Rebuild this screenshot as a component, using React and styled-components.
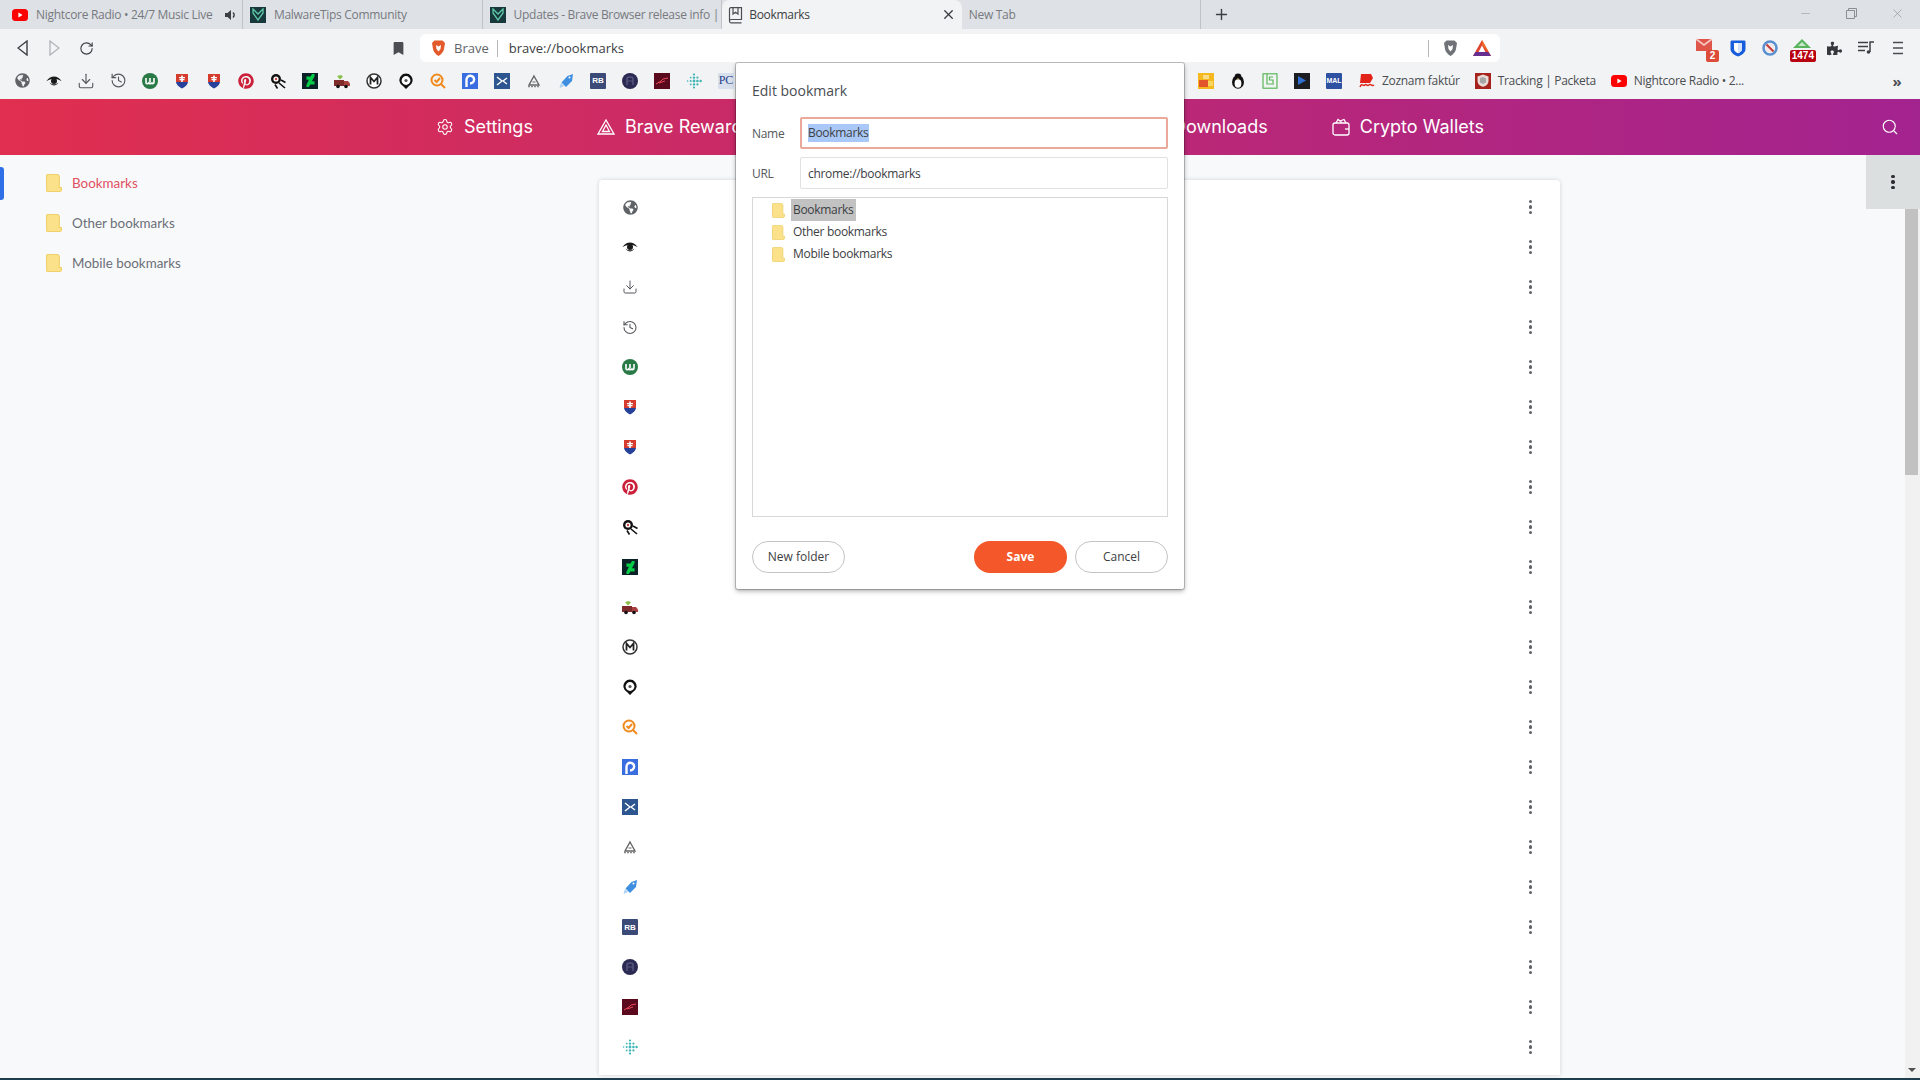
import React from 'react'
import styled, { createGlobalStyle } from 'styled-components'
import { Settings, Search, Plus, X, Minus, RotateCw, Download, History } from 'lucide-react'
import { FaGlobeAmericas, FaPinterest, FaDeviantart, FaPuzzlePiece, FaBookmark } from 'react-icons/fa'

const UI_FONT = '"Open Sans", "Noto Sans", "Liberation Sans", sans-serif'

const GlobalStyle = createGlobalStyle`
  html, body {
    margin: 0;
    height: 100%;
    overflow: hidden;
    background: #f8f9fa;
  }
  * { box-sizing: border-box; }
`

const DarkTile = styled.div`
  width: 16px;
  height: 16px;
  display: flex;
  align-items: center;
  justify-content: center;
  flex: none;
  background: ${(p) => p.$bg};
`

const TextTile = styled.div`
  width: 16px;
  height: 16px;
  display: flex;
  align-items: center;
  justify-content: center;
  flex: none;
  overflow: hidden;
  border-radius: 1px;
  letter-spacing: 0;
  background: ${(p) => p.$bg};
  color: ${(p) => p.$color};
  font-size: ${(p) => p.$size}px;
  font-weight: ${(p) => (p.$bold ? 700 : 400)};
  font-family: ${(p) => (p.$serif ? '"Liberation Serif", serif' : '"Liberation Sans", sans-serif')};
`

const folderPath = 'M1.5 0.5H10.5C12 0.5 12.5 1.5 12.5 3V13.5H14.5V15.5C14.5 16.8 13.8 17.5 12.5 17.5H1.5C0.9 17.5 0.5 17.1 0.5 16.5V1.5C0.5 0.9 0.9 0.5 1.5 0.5Z'

const FolderIcon = ({ w = 16, h = 18 }) => (
  <svg width={w} height={h} viewBox='0 0 15 18' preserveAspectRatio='none'>
    <path d={folderPath} fill='#fbe28a' stroke='#efd06a' />
  </svg>
)

const Shield = () => (
  <svg width='16' height='16' viewBox='0 0 16 16'>
    <path d='M2 1H14V9H2Z' fill='#d63c2e' />
    <path d='M2 9H14C13.6 12 11 14 8 15.5C5 14 2.4 12 2 9Z' fill='#27409a' />
    <path d='M7.2 2.5H8.8V4H11V5.3H8.8V6H10.5V7.2H8.8V9H7.2V7.2H5.5V6H7.2V5.3H5V4H7.2Z' fill='#fff' />
  </svg>
)

const favicons = {
  globe: <FaGlobeAmericas size={15} color='#5f6368' />,
  eye: (
    <svg width='16' height='16' viewBox='0 0 16 16' fill='#1a1a1a'>
      <path d='M0.3 8.2C2.8 4.6 5.4 3.4 8 3.4S13.2 4.6 15.7 8.2C13.2 6.6 11 6 8 6S2.8 6.6 0.3 8.2Z' />
      <circle cx='8' cy='8' r='3' />
      <path d='M3.5 9.5C5 11.8 6.5 12.4 8 12.4S11 11.8 12.5 9.5C11 10.8 9.5 11.3 8 11.3S5 10.8 3.5 9.5Z' />
    </svg>
  ),
  download: <Download size={18} color='#55575c' strokeWidth={1.5} />,
  history: <History size={17} color='#55575c' strokeWidth={1.6} />,
  utorrent: (
    <svg width='16' height='16' viewBox='0 0 16 16'>
      <circle cx='8' cy='8' r='8' fill='#2a7a48' />
      <path d='M4 5V9.5C4 11 6 11 6.7 10C7.4 11 9.3 11 10 10C10.6 11 12 10.7 12 9.3V5M8 5V9.5' fill='none' stroke='#fff' strokeWidth='1.6' />
    </svg>
  ),
  shield: <Shield />,
  pinterest: <FaPinterest size={16} color='#cb1f3a' />,
  comet: (
    <svg width='16' height='16' viewBox='0 0 16 16'>
      <circle cx='6' cy='6' r='5' fill='#111' />
      <circle cx='6' cy='6' r='2.6' fill='#fff' />
      <circle cx='6' cy='6' r='1.2' fill='#c44' />
      <path d='M9 10L15 15M5 11.5L7.5 15.5M11 7L15.5 9.5' stroke='#111' strokeWidth='1.6' />
    </svg>
  ),
  deviant: (
    <DarkTile $bg='#0b2027'>
      <FaDeviantart size={13} color='#05cc47' />
    </DarkTile>
  ),
  truck: (
    <svg width='16' height='16' viewBox='0 0 16 16'>
      <path d='M0 7H10V13H0Z' fill='#7d2b2b' />
      <path d='M10 8H14L16 10.5V13H10Z' fill='#a94040' />
      <circle cx='4' cy='13.5' r='1.8' fill='#111' />
      <circle cx='12' cy='13.5' r='1.8' fill='#111' />
      <path d='M3 3L6 6.5L9 3.5L7 2Z' fill='#8ac04a' />
    </svg>
  ),
  metro: (
    <svg width='16' height='16' viewBox='0 0 16 16'>
      <circle cx='8' cy='8' r='7' fill='#fff' stroke='#333' strokeWidth='1.5' />
      <path d='M4.5 11.5V4.5L8 8.5L11.5 4.5V11.5' fill='none' stroke='#222' strokeWidth='1.8' />
    </svg>
  ),
  target: (
    <svg width='16' height='16' viewBox='0 0 16 16'>
      <path d='M8 16L5 13A6.6 6.6 0 1 1 11 13Z' fill='#111' />
      <circle cx='8' cy='7.5' r='4.4' fill='#fff' />
      <circle cx='8' cy='7.5' r='1.6' fill='#555' />
    </svg>
  ),
  magnifier: (
    <svg width='16' height='16' viewBox='0 0 16 16'>
      <circle cx='7' cy='7' r='5.5' fill='none' stroke='#f08a1d' strokeWidth='2' />
      <path d='M4.5 7L6.6 9L10 5M11 11L15 15' fill='none' stroke='#f08a1d' strokeWidth='2' />
    </svg>
  ),
  pcloud: (
    <DarkTile $bg='#3a6ee0'>
      <svg width='12' height='13' viewBox='0 0 12 13'>
        <path d='M2.5 13V5.5A3.8 3.8 0 1 1 6 9.3' fill='none' stroke='#fff' strokeWidth='2.4' />
      </svg>
    </DarkTile>
  ),
  xtile: (
    <DarkTile $bg='#2d5590'>
      <svg width='12' height='10' viewBox='0 0 12 10'>
        <path d='M1 1L6 5L1 9M11 2L7 5L11 8' fill='none' stroke='#fff' strokeWidth='1.4' />
      </svg>
    </DarkTile>
  ),
  pyramid: (
    <svg width='16' height='16' viewBox='0 0 16 16'>
      <path d='M8 3L13 12H3Z' fill='none' stroke='#666' strokeWidth='1.4' />
      <path d='M6.5 9H9.5' stroke='#666' />
      <path d='M2 13.5H14' stroke='#888' strokeWidth='1.5' strokeDasharray='2 1' />
    </svg>
  ),
  tag: (
    <svg width='16' height='16' viewBox='0 0 16 16'>
      <path d='M15 1L14 8L8 14L3.5 9.5L9.5 3Z' fill='#3f8fe0' />
      <path d='M3 10L6 13L1.5 15Z' fill='#a8d0f4' />
      <circle cx='11.5' cy='4.5' r='1' fill='#fff' />
    </svg>
  ),
  rb: <TextTile $bg='#3c4a78' $color='#fff' $size={8} $bold>RB</TextTile>,
  dark: (
    <svg width='16' height='16' viewBox='0 0 16 16'>
      <circle cx='8' cy='8' r='8' fill='#2a2a52' />
      <path d='M5 12V5.5C5 4.5 6 4 8 4S11 4.5 11 5.5V12' fill='none' stroke='#55557f' strokeWidth='1.5' />
      <path d='M5 8H11' stroke='#55557f' />
    </svg>
  ),
  red: (
    <DarkTile $bg='#5a0a1c'>
      <svg width='14' height='10' viewBox='0 0 14 10'>
        <path d='M1 8L6 5L8 3L13 2M4 7L10 5' fill='none' stroke='#e8485a' strokeWidth='1' />
      </svg>
    </DarkTile>
  ),
  fitbit: (
    <svg width='16' height='16' viewBox='0 0 16 16' fill='#3cb4b4'>
      <circle cx='8' cy='1.5' r='1.1' />
      <circle cx='8' cy='4.6' r='1.2' />
      <circle cx='8' cy='8' r='1.4' />
      <circle cx='8' cy='11.4' r='1.2' />
      <circle cx='8' cy='14.5' r='1.1' />
      <circle cx='11.4' cy='4.6' r='1.1' />
      <circle cx='11.4' cy='8' r='1.3' />
      <circle cx='11.4' cy='11.4' r='1.1' />
      <circle cx='14.6' cy='8' r='1.2' />
      <circle cx='4.7' cy='4.6' r='0.9' />
      <circle cx='4.7' cy='8' r='1' />
      <circle cx='4.7' cy='11.4' r='0.9' />
      <circle cx='1.6' cy='8' r='0.8' />
    </svg>
  ),
  pcforum: <TextTile $bg='#d8e0ee' $color='#24408a' $size={12} $serif>PC</TextTile>,
  video: (
    <svg width='16' height='16' viewBox='0 0 16 16'>
      <rect width='16' height='16' fill='#f5b81f' />
      <rect x='1' y='7' width='9' height='7' fill='#e2552a' />
      <rect x='10' y='8' width='5' height='5' fill='#f6d560' />
      <rect x='5' y='2' width='6' height='4' fill='#f9dc85' />
    </svg>
  ),
  penguin: (
    <svg width='16' height='16' viewBox='0 0 16 16'>
      <ellipse cx='8' cy='9' rx='6' ry='6.8' fill='#111' />
      <circle cx='8' cy='4' r='3.4' fill='#111' />
      <ellipse cx='8' cy='10.5' rx='3.4' ry='4.2' fill='#fff' />
      <path d='M7 5H9L8 6.2Z' fill='#e8a020' />
    </svg>
  ),
  maze: (
    <svg width='16' height='16' viewBox='0 0 16 16' fill='none' stroke='#58b858' strokeWidth='1.2'>
      <rect x='1' y='0.8' width='14' height='14.4' />
      <path d='M5 1V11H10M11 4H7.5V7H11V12' />
    </svg>
  ),
  play: (
    <DarkTile $bg='#1c1d20'>
      <svg width='8' height='9' viewBox='0 0 8 9'>
        <path d='M0 0L8 4.5L0 9Z' fill='#2f6fd0' />
      </svg>
    </DarkTile>
  ),
  mal: <TextTile $bg='#2e51a2' $color='#fff' $size={7} $bold>MAL</TextTile>,
  zoznam: (
    <svg width='16' height='16' viewBox='0 0 16 16'>
      <path d='M2 1H12L14 5L11 10H1Z' fill='#e2231a' />
      <path d='M1 14C3 9 4 14 6 12C7 10 8 14 10 12C11 10 13 14 15 12' fill='none' stroke='#e2231a' strokeWidth='1.4' />
    </svg>
  ),
  packeta: (
    <DarkTile $bg='#a5231c'>
      <svg width='12' height='13' viewBox='0 0 12 13'>
        <path d='M6 0.5L11.5 2.5V7C11.5 10 9 12 6 12.8C3 12 0.5 10 0.5 7V2.5Z' fill='#e9d9d4' />
        <path d='M3 4L6 3L9 4.5V8.5L6 10L3 8.5Z' fill='#a5a5a5' />
      </svg>
    </DarkTile>
  ),
  youtube: (
    <svg width='16' height='16' viewBox='0 0 16 16'>
      <rect x='0' y='2' width='16' height='12' rx='3.5' fill='#f00' />
      <path d='M6.4 5.5L10.6 8L6.4 10.5Z' fill='#fff' />
    </svg>
  ),
  malware: (
    <DarkTile $bg='#17393b'>
      <svg width='12' height='13' viewBox='0 0 12 13'>
        <path d='M1 1L6 6L11 1V5L6 12L1 5Z' fill='none' stroke='#5ec8a8' strokeWidth='1.3' />
      </svg>
    </DarkTile>
  ),
}

const tabs = [
  { icon: 'youtube', title: 'Nightcore Radio • 24/7 Music Live', audio: true },
  { icon: 'malware', title: 'MalwareTips Community' },
  { icon: 'malware', title: 'Updates - Brave Browser release info |' },
  { title: 'Bookmarks', active: true },
  { title: 'New Tab' },
]

const barIcons = ['globe', 'eye', 'download', 'history', 'utorrent', 'shield', 'shield', 'pinterest', 'comet', 'deviant', 'truck', 'metro', 'target', 'magnifier', 'pcloud', 'xtile', 'pyramid', 'tag', 'rb', 'dark', 'red', 'fitbit', 'pcforum']
const barIconsRight = ['video', 'penguin', 'maze', 'play', 'mal']
const barLinks = [
  { icon: 'zoznam', title: 'Zoznam faktúr' },
  { icon: 'packeta', title: 'Tracking | Packeta' },
  { icon: 'youtube', title: 'Nightcore Radio • 2...' },
]
const listIcons = barIcons.slice(0, 22)
const folders = ['Bookmarks', 'Other bookmarks', 'Mobile bookmarks']

const Kebab = () => (
  <KebabDots>
    <i />
    <i />
    <i />
  </KebabDots>
)

const BookIcon = () => (
  <svg width='15' height='17' viewBox='0 0 15 17' fill='none' stroke='#4a4d52' strokeWidth='1.2'>
    <path d='M1.5 14V2C1.5 1.2 2 0.7 2.8 0.7H13.5V12.5H3C2 12.5 1.5 13 1.5 14S2 15.8 3 15.8H13.5' />
    <path d='M5 1V7L7.5 5.2L10 7V1' />
  </svg>
)

const BraveShield = ({ color }) => (
  <svg width='15' height='17' viewBox='0 0 15 17'>
    <path d='M3.5 0.5H11.5L14 3L13 9C12.5 12 10 14.5 7.5 16C5 14.5 2.5 12 2 9L1 3Z' fill={color} />
    <path d='M5 5L7.5 6.5L10 5L9.5 9L7.5 11.5L5.5 9Z' fill='#fff' />
  </svg>
)

const BatLogo = () => (
  <svg width='18' height='16' viewBox='0 0 18 16'>
    <path d='M9 0L18 16H0Z' fill='#e0442e' />
    <path d='M0 16H18L15.5 12H2.5Z' fill='#662d91' />
    <path d='M9 0L18 16L15.5 12L9 5Z' fill='#f26b21' />
    <path d='M9 5.5L12.4 12H5.6Z' fill='#fff' />
  </svg>
)

const App = () => (
  <Page>
    <GlobalStyle />
    <TabStrip>
      {tabs.map((tab) => (
        <Tab key={tab.title} $active={tab.active} $audio={tab.audio}>
          {tab.active ? <BookIcon /> : tab.icon && favicons[tab.icon]}
          <TabTitle $active={tab.active}>{tab.title}</TabTitle>
          {tab.audio && (
            <svg width='12' height='12' viewBox='0 0 12 12' fill='#3c4043'>
              <path d='M0 4H2.5L6 1V11L2.5 8H0Z' />
              <path d='M8 3.5C9.4 5 9.4 7 8 8.5' fill='none' stroke='#3c4043' strokeWidth='1.4' />
            </svg>
          )}
          {tab.active && <X size={15} color='#3c4043' strokeWidth={2.2} />}
        </Tab>
      ))}
      <NewTabButton>
        <Plus size={17} color='#3c4043' strokeWidth={2} />
      </NewTabButton>
      <WindowButtons>
        <Minus size={13} color='#8a8d91' strokeWidth={1} />
        <svg width='11' height='11' viewBox='0 0 11 11' fill='none' stroke='#8a8d91'>
          <path d='M0.5 2.5H8.5V10.5H0.5ZM2.5 2.5V0.5H10.5V8.5H8.5' />
        </svg>
        <X size={15} color='#8a8d91' strokeWidth={1} />
      </WindowButtons>
    </TabStrip>

    <Toolbar>
      <ToolButton>
        <svg width='11' height='16' viewBox='0 0 11 16' fill='none' stroke='#3c4043' strokeWidth='1.4'>
          <path d='M10 1L1 8L10 15Z' />
        </svg>
      </ToolButton>
      <ToolButton>
        <svg width='11' height='16' viewBox='0 0 11 16' fill='none' stroke='#b4b6b9' strokeWidth='1.4'>
          <path d='M1 1L10 8L1 15Z' />
        </svg>
      </ToolButton>
      <ToolButton>
        <RotateCw size={15} color='#3c4043' strokeWidth={1.8} />
      </ToolButton>
      <ToolbarSpacer />
      <ToolButton>
        <FaBookmark size={13} color='#4a4d52' />
      </ToolButton>
      <AddressBar>
        <BraveShield color='#e2592c' />
        <AddressLabel>Brave</AddressLabel>
        <AddressDivider />
        <AddressUrl>brave://bookmarks</AddressUrl>
        <AddressEnd>
          <AddressDivider $end />
          <BraveShield color='#6f7276' />
          <BatLogo />
        </AddressEnd>
      </AddressBar>
      <ToolbarGap />
      <ToolButton>
        <svg width='24' height='22' viewBox='0 0 24 22'>
          <path d='M2 2H18V14H2Z' fill='#e0554a' />
          <path d='M2 2L10 8L18 2' fill='none' stroke='#f6c9c4' strokeWidth='1.6' />
        </svg>
        <Badge $bg='#dd4b39' $right={3}>2</Badge>
      </ToolButton>
      <ToolButton>
        <svg width='16' height='17' viewBox='0 0 16 17'>
          <path d='M2 0.5H14C15 0.5 15.5 1 15.5 2V9C15.5 13 11 15.5 8 16.5C5 15.5 0.5 13 0.5 9V2C0.5 1 1 0.5 2 0.5Z' fill='#175ddc' />
          <path d='M4 3H12V9C12 11 10 12.4 8 13.2C6 12.4 4 11 4 9Z' fill='#fff' />
          <path d='M8 3H12V9C12 11 10 12.4 8 13.2Z' fill='#d7e3fb' />
        </svg>
      </ToolButton>
      <ToolButton>
        <svg width='16' height='16' viewBox='0 0 16 16' fill='none'>
          <circle cx='8' cy='8' r='6.5' stroke='#5a8fd0' strokeWidth='2.5' />
          <circle cx='8' cy='8' r='4.4' fill='#f6e6e6' />
          <path d='M4.5 4.5L11.5 11.5' stroke='#c43a3a' strokeWidth='2' />
        </svg>
      </ToolButton>
      <ToolButton>
        <svg width='24' height='20' viewBox='0 0 24 20'>
          <path d='M12 1L21 10H3Z' fill='#57b45c' />
          <path d='M12 4L16 8H8Z' fill='#c6e8c8' />
        </svg>
        <Badge $bg='#b8000e' $right={2}>1474</Badge>
      </ToolButton>
      <ToolButton>
        <FaPuzzlePiece size={15} color='#34373b' />
      </ToolButton>
      <ToolButton>
        <svg width='17' height='14' viewBox='0 0 17 14' fill='none' stroke='#3c4043' strokeWidth='1.3'>
          <path d='M0 1.5H10M0 5.5H10M0 9.5H7' />
          <path d='M12 11V1H16' strokeWidth='1.5' />
          <circle cx='10.5' cy='11' r='1.8' fill='#3c4043' stroke='none' />
        </svg>
      </ToolButton>
      <ToolButton>
        <svg width='12' height='14' viewBox='0 0 12 14' fill='none' stroke='#4a4d52' strokeWidth='1.5'>
          <path d='M1 1.5H11M1 7H11M1 12.5H11' />
        </svg>
      </ToolButton>
    </Toolbar>

    <BookmarksBar>
      {barIcons.map((name, i) => (
        <BarIcon key={i}>{favicons[name]}</BarIcon>
      ))}
      <BarHidden />
      {barIconsRight.map((name) => (
        <BarIcon key={name}>{favicons[name]}</BarIcon>
      ))}
      {barLinks.map((link) => (
        <BarLink key={link.title}>
          {favicons[link.icon]}
          <span>{link.title}</span>
        </BarLink>
      ))}
      <BarMore>»</BarMore>
    </BookmarksBar>

    <Header>
      <NavItem>
        <Settings size={18} strokeWidth={1.4} />
        <span>Settings</span>
      </NavItem>
      <NavItem>
        <svg width='18' height='16' viewBox='0 0 18 16' fill='none' stroke='#fff' strokeWidth='1.3'>
          <path d='M9 1L17 15H1Z' />
          <path d='M9 6L12.5 12.5H5.5Z' />
        </svg>
        <span>Brave Rewards</span>
      </NavItem>
      <NavItem $width={265} />
      <NavItem>
        <Download size={18} strokeWidth={1.4} />
        <span>Downloads</span>
      </NavItem>
      <NavItem>
        <svg width='18' height='18' viewBox='0 0 18 18' fill='none' stroke='#fff' strokeWidth='1.3'>
          <rect x='1' y='5' width='16' height='12' rx='2' />
          <path d='M4 5L6 1.5L10 4.5M8 3L12 1.5L14 5' />
          <path d='M13 11H17' />
        </svg>
        <span>Crypto Wallets</span>
      </NavItem>
      <HeaderSearch>
        <Search size={18} strokeWidth={1.5} />
      </HeaderSearch>
    </Header>

    <Main>
      <Sidebar>
        {folders.map((name, i) => (
          <SidebarRow key={name} $active={i === 0}>
            <FolderIcon />
            <span>{name}</span>
          </SidebarRow>
        ))}
      </Sidebar>
      <Card>
        {listIcons.map((name, i) => (
          <CardRow key={i}>
            <CardIcon>{favicons[name]}</CardIcon>
            <Kebab />
          </CardRow>
        ))}
      </Card>
      <MenuCorner>
        <KebabDots $dark>
          <i />
          <i />
          <i />
        </KebabDots>
      </MenuCorner>
      <Scrollbar>
        <ScrollThumb />
        <ScrollArrow />
      </Scrollbar>
    </Main>
    <BottomLine />

    <Dialog>
      <DialogTitle>Edit bookmark</DialogTitle>
      <FieldRow>
        <FieldLabel>Name</FieldLabel>
        <FieldBox $focused>
          <Selected>Bookmarks</Selected>
        </FieldBox>
      </FieldRow>
      <FieldRow>
        <FieldLabel>URL</FieldLabel>
        <FieldBox>chrome://bookmarks</FieldBox>
      </FieldRow>
      <Tree>
        {folders.map((name, i) => (
          <TreeRow key={name}>
            <FolderIcon w={13} h={15} />
            <TreeLabel $selected={i === 0}>{name}</TreeLabel>
          </TreeRow>
        ))}
      </Tree>
      <DialogButtons>
        <PillButton>New folder</PillButton>
        <ButtonSpacer />
        <PillButton $primary>Save</PillButton>
        <PillButton>Cancel</PillButton>
      </DialogButtons>
    </Dialog>
  </Page>
)

export default App

const Page = styled.div`
  position: relative;
  width: 1920px;
  height: 1080px;
  display: flex;
  flex-direction: column;
  overflow: hidden;
  font-family: ${UI_FONT};
  background: #f8f9fa;
`

const TabStrip = styled.div`
  height: 29px;
  flex: none;
  display: flex;
  background: #dee1e6;
  font-size: 12px;
  letter-spacing: -0.3px;
`

const Tab = styled.div`
  position: relative;
  width: ${(p) => (p.$audio ? '243px' : '239.6px')};
  height: ${(p) => (p.$active ? '33px' : '29px')};
  flex: none;
  display: flex;
  align-items: ${(p) => (p.$active ? 'flex-start' : 'center')};
  gap: ${(p) => (p.$active ? '6px' : '8px')};
  padding: ${(p) => (p.$active ? '7px 6px 0 6px' : p.$audio ? '0 5px 0 12px' : '0 8px 0 7px')};
  background: ${(p) => (p.$active ? '#f2f3f4' : 'transparent')};
  border-right: ${(p) => (p.$active ? 'none' : '1px solid #bfc2c6')};
  border-radius: ${(p) => (p.$active ? '8px 8px 0 0' : '0')};
  z-index: ${(p) => (p.$active ? 1 : 0)};
`

const TabTitle = styled.span`
  flex: 1;
  min-width: 0;
  white-space: nowrap;
  color: ${(p) => (p.$active ? '#3c4043' : '#777a7e')};
  line-height: 16px;
`

const NewTabButton = styled.div`
  width: 40px;
  display: flex;
  align-items: center;
  justify-content: center;
`

const WindowButtons = styled.div`
  margin-left: auto;
  width: 138px;
  display: grid;
  grid-template-columns: repeat(3, 46px);
  align-items: center;
  justify-items: center;
  padding-bottom: 2px;
`

const Toolbar = styled.div`
  height: 33px;
  flex: none;
  display: flex;
  align-items: flex-start;
  padding: 5px 6px 0;
  background: #f2f3f4;
`

const ToolButton = styled.div`
  position: relative;
  width: 32px;
  height: 28px;
  flex: none;
  display: flex;
  align-items: center;
  justify-content: center;
`

const ToolbarSpacer = styled.div`
  width: 280px;
  flex: none;
`

const ToolbarGap = styled.div`
  flex: 1;
`

const AddressBar = styled.div`
  position: relative;
  z-index: 2;
  margin-left: 6px;
  width: 1080px;
  height: 28px;
  flex: none;
  display: flex;
  align-items: center;
  gap: 8px;
  padding: 0 9px 0 11px;
  background: #fff;
  border-radius: 6px;
  font-size: 13px;
`

const AddressLabel = styled.span`
  color: #5f6368;
`

const AddressDivider = styled.div`
  width: 1px;
  height: 17px;
  margin: ${(p) => (p.$end ? '0 -1px 0 0' : '0 3px 0 0')};
  background: #b5b7ba;
`

const AddressUrl = styled.span`
  color: #3c4043;
`

const AddressEnd = styled.div`
  margin-left: auto;
  display: flex;
  align-items: center;
  gap: 15px;
`

const Badge = styled.span`
  position: absolute;
  right: ${(p) => p.$right}px;
  bottom: 0;
  height: 12px;
  padding: 0 2px;
  min-width: 13px;
  text-align: center;
  border-radius: 2px;
  background: ${(p) => p.$bg};
  color: #fff;
  font: 700 10px/12px "Liberation Sans", sans-serif;
`

const BookmarksBar = styled.div`
  height: 37px;
  flex: none;
  display: flex;
  align-items: center;
  padding: 0 0 0 6px;
  background: #f2f3f4;
  font-size: 12px;
  letter-spacing: -0.3px;
  color: #4a4d52;
`

const BarIcon = styled.div`
  width: 32px;
  height: 32px;
  flex: none;
  display: flex;
  align-items: center;
  justify-content: center;
`

const BarHidden = styled.div`
  width: 448px;
  flex: none;
`

const BarLink = styled.div`
  display: flex;
  align-items: center;
  gap: 7px;
  margin-left: 9px;
  margin-right: 6px;
  white-space: nowrap;
`

const BarMore = styled.div`
  margin-left: auto;
  width: 46px;
  text-align: center;
  font-size: 15px;
  font-weight: 700;
`

const Header = styled.header`
  position: relative;
  height: 56px;
  flex: none;
  display: flex;
  align-items: center;
  justify-content: center;
  gap: 64px;
  padding-bottom: 1px;
  color: #fff;
  background: linear-gradient(90deg, #e02f4f, #a3238f);
  font-family: Inter, sans-serif;
  font-size: 18px;
`

const NavItem = styled.div`
  display: flex;
  align-items: center;
  gap: 10px;
  width: ${(p) => (p.$width ? `${p.$width}px` : 'auto')};
  white-space: nowrap;
`

const HeaderSearch = styled.div`
  position: absolute;
  right: 21px;
  top: 19px;
  display: flex;
`

const Main = styled.div`
  position: relative;
  flex: 1;
  min-height: 0;
  display: flex;
  align-items: flex-start;
`

const Sidebar = styled.nav`
  width: 599px;
  flex: none;
  padding-top: 8px;
  display: flex;
  flex-direction: column;
`

const SidebarRow = styled.div`
  position: relative;
  height: 40px;
  display: flex;
  align-items: center;
  gap: 10px;
  padding-left: 46px;
  font-family: Lato, sans-serif;
  font-size: 13.4px;
  color: ${(p) => (p.$active ? '#e0505f' : '#6b6f78')};

  &::before {
    content: '';
    display: ${(p) => (p.$active ? 'block' : 'none')};
    position: absolute;
    left: 0;
    top: 4px;
    width: 4px;
    height: 33px;
    background: #2f6fe8;
    border-radius: 0 3px 3px 0;
  }
`

const Card = styled.div`
  width: 961px;
  flex: none;
  margin-top: 25px;
  padding: 7px 0 8px;
  background: #fff;
  border-radius: 4px 4px 0 0;
  box-shadow: 0 0 4px rgba(0, 0, 0, 0.16);
`

const CardRow = styled.div`
  height: 40px;
  display: flex;
  align-items: center;
  justify-content: space-between;
  padding: 0 28px 0 23px;
`

const CardIcon = styled.div`
  width: 16px;
  height: 16px;
  display: flex;
  align-items: center;
  justify-content: center;
`

const KebabDots = styled.div`
  display: flex;
  flex-direction: column;
  gap: 2px;

  i {
    display: block;
    width: 3.4px;
    height: 3.4px;
    border-radius: 50%;
    background: ${(p) => (p.$dark ? '#2b2d30' : '#5f6368')};
  }
`

const MenuCorner = styled.div`
  position: absolute;
  right: 0;
  top: 0;
  width: 54px;
  height: 54px;
  display: flex;
  align-items: center;
  justify-content: center;
  background: #dcdfe0;
`

const Scrollbar = styled.div`
  position: absolute;
  right: 0;
  top: 54px;
  bottom: 0;
  width: 15px;
  background: #f1f1f1;
`

const ScrollThumb = styled.div`
  width: 13px;
  height: 266px;
  background: #c1c1c1;
`

const ScrollArrow = styled.div`
  position: absolute;
  left: 3px;
  bottom: 8px;
  border-left: 4px solid transparent;
  border-right: 4px solid transparent;
  border-top: 4px solid #505050;
`

const BottomLine = styled.div`
  position: absolute;
  left: 0;
  right: 0;
  bottom: 0;
  height: 2px;
  background: #1e3d4d;
`

const Dialog = styled.div`
  position: absolute;
  left: 736px;
  top: 63px;
  width: 448px;
  height: 526px;
  padding: 0 16px;
  display: flex;
  flex-direction: column;
  background: #fff;
  border-radius: 2px;
  box-shadow: 0 0 0 1px rgba(0, 0, 0, 0.2), 0 2px 5px rgba(0, 0, 0, 0.35);
  color: #3c4043;
  font-size: 12px;
`

const DialogTitle = styled.div`
  height: 54px;
  padding-top: 17px;
  font-size: 14px;
  line-height: 22px;
  color: #4a4d52;
`

const FieldRow = styled.div`
  display: flex;
  align-items: center;
  margin-bottom: 8px;
`

const FieldLabel = styled.div`
  width: 48px;
  flex: none;
  color: #55585c;
  letter-spacing: -0.3px;
`

const FieldBox = styled.div`
  width: 368px;
  height: 32px;
  display: flex;
  align-items: center;
  background: #fff;
  border-radius: 2px;
  letter-spacing: -0.3px;
  border: ${(p) => (p.$focused ? '2px solid #eba99a' : '1px solid #dfe1e5')};
  padding: ${(p) => (p.$focused ? '0 6px' : '0 7px')};
`

const Selected = styled.span`
  height: 18px;
  line-height: 18px;
  background: #aac8f7;
`

const Tree = styled.div`
  height: 320px;
  flex: none;
  padding-top: 1px;
  border: 1px solid #d8d8d8;
  letter-spacing: -0.3px;
`

const TreeRow = styled.div`
  height: 22px;
  display: flex;
  align-items: center;
  gap: 6px;
  padding-left: 19px;
`

const TreeLabel = styled.span`
  height: 22px;
  line-height: 22px;
  padding: 0 2px;
  background: ${(p) => (p.$selected ? '#c2c2c2' : 'transparent')};
`

const DialogButtons = styled.div`
  margin-top: 24px;
  display: flex;
  gap: 8px;
`

const ButtonSpacer = styled.div`
  flex: 1;
`

const PillButton = styled.div`
  width: 93px;
  height: 32px;
  display: flex;
  align-items: center;
  justify-content: center;
  padding-bottom: 2px;
  border-radius: 16px;
  font-weight: ${(p) => (p.$primary ? 700 : 400)};
  color: ${(p) => (p.$primary ? '#fff' : '#3c4043')};
  background: ${(p) => (p.$primary ? '#f4572a' : '#fff')};
  border: ${(p) => (p.$primary ? 'none' : '1px solid #c4c4c4')};
`
